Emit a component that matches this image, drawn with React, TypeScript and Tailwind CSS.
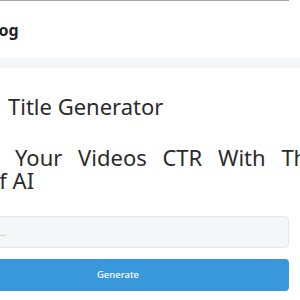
import React from 'react';

// Cropped view of a title generator page: content starts left of the viewport.
export default function App() {
  return (
    <div className="w-[300px] h-[300px] overflow-hidden bg-white font-['Noto_Sans','Open_Sans',sans-serif] text-[#222]">
      <div className="-ml-[53px] w-[342px]">
        {/* Header */}
        <header className="h-[58px] border-t border-[#a3a3a3] flex items-center pl-[36px]">
          <a className="text-[16px] font-bold text-[#1f2328] leading-none">Blog</a>
        </header>
        <div className="h-[10px] bg-[#f5f6f8] w-[400px]" />

        {/* Headings */}
        <h1 className="mt-[24px] pl-[61px] text-[22px] leading-[28px] text-[#2b2b2b] whitespace-nowrap">
          Title Generator
        </h1>
        <h2 className="mt-[26px] text-[22px] leading-[23px] text-[#2b2b2b] whitespace-nowrap">
          <span className="block pl-[68px] [word-spacing:10px]">Your Videos CTR With The Power</span>
          <span className="block pl-[39px]">of AI</span>
        </h2>

        {/* Form */}
        <div className="mt-[24px] flex flex-col gap-[11px]">
          <input
            className="h-[32px] w-full rounded-[4px] border border-[#e6e8eb] bg-[#f5f6f8] pl-[14px] text-[9px] placeholder:text-[#9aa0a6] outline-none"
            placeholder="Keyword..."
          />
          <button className="h-[32px] w-full rounded-[4px] bg-[#3898db] text-white text-[9.5px] font-medium">
            Generate
          </button>
        </div>
      </div>
    </div>
  );
}
